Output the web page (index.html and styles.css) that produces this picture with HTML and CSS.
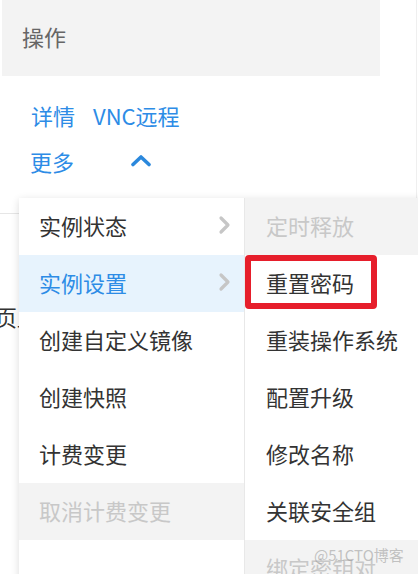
FILE: index.html
```html
<!DOCTYPE html>
<html lang="zh-CN">
<head>
<meta charset="utf-8">
<title>操作</title>
<link rel="stylesheet" href="styles.css">
</head>
<body>
<div class="page">
  <div class="th">操作</div>
  <div class="ops">
    <div class="ops-row">
      <a class="link">详情</a>
      <a class="link">VNC远程</a>
    </div>
    <div class="ops-row more">
      <a class="link">更多</a>
      <svg class="up" width="22" height="13" viewBox="0 0 22 13"><path d="M3 10.5 L11 3 L19 10.5" fill="none" stroke="#2b88dc" stroke-width="3.6" stroke-linecap="round" stroke-linejoin="round"/></svg>
    </div>
  </div>
  <div class="tbl">
    <div class="tbl-row">每页显示</div>
  </div>

  <div class="menu">
    <ul class="panel main">
      <li class="item">实例状态<svg class="chev" width="14" height="20" viewBox="0 0 14 20"><path d="M4 3 L11 10 L4 17" fill="none" stroke="#c6c6c6" stroke-width="3.2" stroke-linecap="round" stroke-linejoin="round"/></svg></li>
      <li class="item active">实例设置<svg class="chev" width="14" height="20" viewBox="0 0 14 20"><path d="M4 3 L11 10 L4 17" fill="none" stroke="#c6c6c6" stroke-width="3.2" stroke-linecap="round" stroke-linejoin="round"/></svg></li>
      <li class="item">创建自定义镜像</li>
      <li class="item">创建快照</li>
      <li class="item">计费变更</li>
      <li class="item disabled">取消计费变更</li>
      <li class="item blank"></li>
    </ul>
    <ul class="panel sub">
      <li class="item disabled">定时释放</li>
      <li class="item marked">重置密码<span class="mark"></span></li>
      <li class="item">重装操作系统</li>
      <li class="item">配置升级</li>
      <li class="item">修改名称</li>
      <li class="item">关联安全组</li>
      <li class="item disabled">绑定密钥对</li>
    </ul>
  </div>
  <div class="watermark">@51CTO博客</div>
</div>
</body>
</html>
```

FILE: styles.css
```css
html, body {
  margin: 0;
  padding: 0;
  background: #fff;
}
body {
  width: 418px;
  height: 574px;
  overflow: hidden;
  font-family: "Noto Sans CJK SC", "Noto Sans", "Liberation Sans", sans-serif;
}
.page {
  position: relative;
  width: 416px;
  height: 574px;
  border-right: 1px solid #efefef;
}
.th {
  margin-left: 2px;
  width: 378px;
  height: 76px;
  box-sizing: border-box;
  padding: 0 0 4px 20px;
  background: #f3f3f3;
  display: flex;
  align-items: center;
  font-size: 22px;
  color: #666;
}
.ops {
  padding: 24px 0 0 31px;
}
.ops-row {
  display: flex;
  align-items: center;
  gap: 18px;
  height: 30px;
  line-height: 30px;
}
.ops-row.more {
  margin-top: 16px;
  margin-left: -1px;
  gap: 56px;
}
.link {
  font-size: 22px;
  color: #2d8ce6;
  cursor: pointer;
}
.up {
  display: block;
  margin-top: -2px;
}
.tbl {
  margin-top: 37px;
  border-top: 1px solid #e6e6e6;
}
.tbl-row {
  padding-top: 87px;
  line-height: 30px;
  font-size: 22px;
  color: #333;
  text-indent: -27px;
  white-space: nowrap;
}
.menu {
  position: absolute;
  top: 198px;
  left: 19px;
  display: flex;
  background: #fff;
  box-shadow: 0 2px 8px rgba(0, 0, 0, 0.14);
}
.panel {
  list-style: none;
  margin: 0;
  padding: 0;
}
.panel.main {
  width: 226px;
  box-sizing: border-box;
  border-right: 1px solid #e8e8e8;
}
.panel.sub {
  width: 190px;
}
.item {
  position: relative;
  height: 57px;
  box-sizing: border-box;
  padding-bottom: 3px;
  display: flex;
  align-items: center;
  justify-content: space-between;
  font-size: 22px;
  color: #333;
  white-space: nowrap;
}
.main .item {
  padding-left: 20px;
  padding-right: 13px;
}
.sub .item {
  padding-left: 21px;
}
.item.blank {
  height: 60px;
}
.chev {
  display: block;
  margin-top: -1px;
}
.item.active {
  background: #e7f3fd;
  color: #2d8ce6;
}
.item.disabled {
  background: #f3f3f3;
  color: #c8c8c8;
}
.mark {
  position: absolute;
  left: 0;
  top: 0;
  width: 132px;
  height: 54px;
  box-sizing: border-box;
  border: 6px solid #e61e2b;
  border-radius: 4px;
}
.watermark {
  position: absolute;
  left: 314px;
  top: 545px;
  font-size: 15px;
  line-height: 20px;
  color: rgba(150, 150, 150, 0.55);
  white-space: nowrap;
}
```
